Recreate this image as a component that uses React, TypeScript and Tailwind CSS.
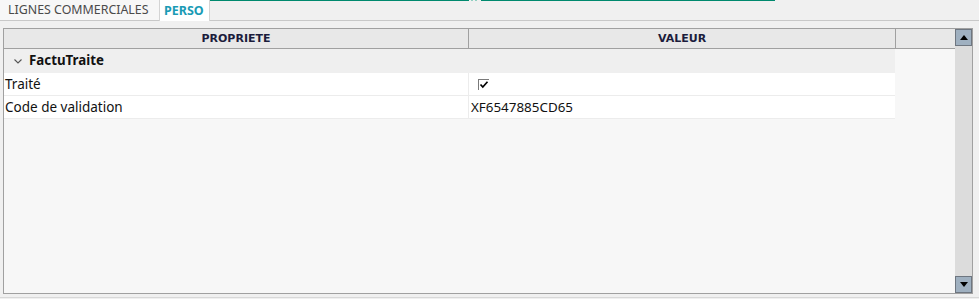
import React from 'react';

const font = { fontFamily: '"Noto Sans", "Open Sans", Arial, sans-serif' };
const headFont = { fontFamily: '"DejaVu Sans", Verdana, sans-serif' };

const Tabs: React.FC = () => (
  <div className="flex h-[21px] bg-[#f0f0f0]">
    <div className="w-[159px] border-b border-[#c8c8c8] bg-[#f7f7f7] pl-[8px] pt-[2px] text-[12.4px] leading-[15px] text-[#4a4a4a]">
      LIGNES COMMERCIALES
    </div>
    <div className="w-[51px] border-x border-[#d4d4d4] bg-white pl-[4px] pt-[3px] text-[12.5px] font-bold leading-[15px] text-[#1a9bb5]">
      PERSO
    </div>
    <div className="flex flex-1 flex-col border-b border-[#c8c8c8]">
      <div className="flex h-px w-[565px]">
        <div className="w-[259px] bg-[#00896e]" />
        <div className="w-[2px]" />
        <div className="w-[2px] bg-[#8fcfc0]" />
        <div className="w-[2px]" />
        <div className="w-[2px] bg-[#8fcfc0]" />
        <div className="w-[4px]" />
        <div className="flex-1 bg-[#00896e]" />
      </div>
    </div>
  </div>
);

const Checkbox: React.FC = () => (
  <div className="relative h-[11px] w-[11px] border-l border-t border-[#7a7a7a] bg-white">
    <svg viewBox="0 0 10 10" className="absolute left-0 top-0 h-[10px] w-[10px]">
      <path d="M1.5 4.5 L3.8 7 L8.5 1.8" fill="none" stroke="#000" strokeWidth="1.7" />
    </svg>
  </div>
);

const ScrollButton: React.FC<{ up?: boolean }> = ({ up }) => (
  <div className="flex h-[17px] w-[17px] items-center justify-center border border-[#6e7680] bg-[#9fb0c0]">
    <svg viewBox="0 0 8 5" className="h-[5px] w-[8px]">
      {up ? <path d="M0 5 L4 0 L8 5 Z" fill="#000" /> : <path d="M0 0 L8 0 L4 5 Z" fill="#000" />}
    </svg>
  </div>
);

export default function App() {
  return (
    <div className="h-[299px] w-[979px] overflow-hidden bg-[#f0f0f0]" style={font}>
      <Tabs />
      <div className="h-[277px] border-b border-[#d8d8d8] px-[3px] pt-[7px]">
        <div className="flex h-[266px] w-[970px] border border-[#a0a0a0] bg-[#f7f7f7]">
          <div className="flex flex-1 flex-col">
            {/* header */}
            <div
              className="flex h-[20px] border-b border-[#a0a0a0] bg-[#e8e8e8] text-[11px] font-bold leading-[19px] text-[#1c1c3c]"
              style={headFont}
            >
              <div className="w-[465px] border-r border-[#a0a0a0] text-center">PROPRIETE</div>
              <div className="w-[427px] border-r border-[#a0a0a0] text-center">VALEUR</div>
              <div className="flex-1" />
            </div>
            {/* group */}
            <div className="flex h-[24px] w-[891px] items-center bg-[#efefef] pl-[10px] text-[13.3px] font-bold text-[#111]">
              <svg viewBox="0 0 8 5" className="mr-[7px] h-[5px] w-[8px]">
                <path d="M0.5 0.5 L4 4 L7.5 0.5" fill="none" stroke="#555" strokeWidth="1.1" />
              </svg>
              FactuTraite
            </div>
            <div className="flex h-[23px] w-[891px] border-b border-[#ececec] bg-white text-[13.5px] leading-[22px] text-[#111]">
              <div className="w-[465px] border-r border-[#ececec] pl-[1px]">Traité</div>
              <div className="flex flex-1 items-center pl-[9px]">
                <Checkbox />
              </div>
            </div>
            <div className="flex h-[23px] w-[891px] border-b border-[#ececec] bg-white text-[13.5px] leading-[22px] text-[#111]">
              <div className="w-[465px] border-r border-[#ececec] pl-[1px]">Code de validation</div>
              <div className="flex-1 pl-[2px] text-[13.4px]">XF6547885CD65</div>
            </div>
          </div>
          <div className="flex w-[17px] flex-col justify-between bg-[#dcdcdc]">
            <ScrollButton up />
            <ScrollButton />
          </div>
        </div>
      </div>
    </div>
  );
}
